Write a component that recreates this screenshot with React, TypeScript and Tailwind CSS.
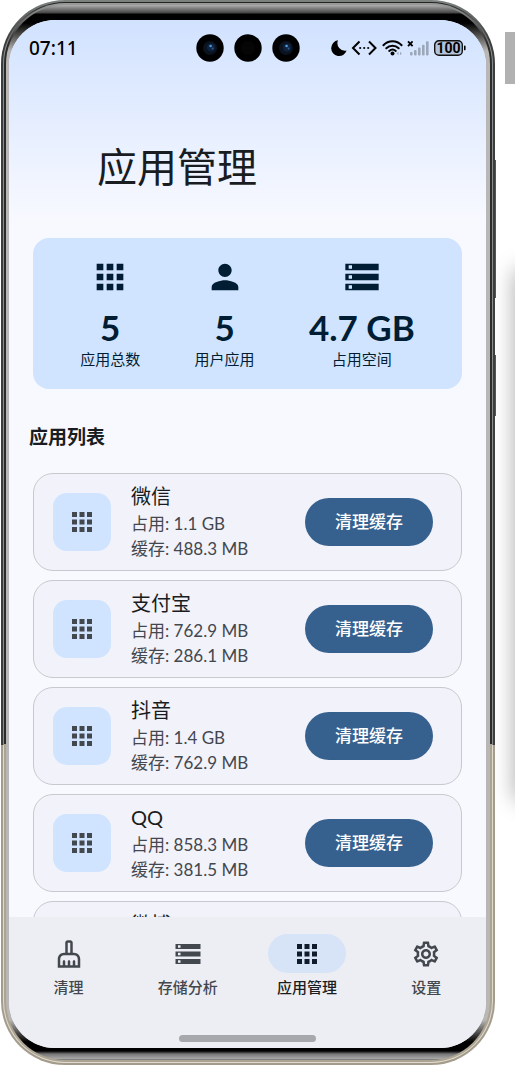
import type { ReactNode } from "react";
import {
  MdApps,
  MdOutlineCleaningServices,
  MdOutlineSettings,
  MdPerson,
  MdStorage,
} from "react-icons/md";

const STATS = [
  { icon: MdApps, value: "5", label: "应用总数" },
  { icon: MdPerson, value: "5", label: "用户应用" },
  { icon: MdStorage, value: "4.7 GB", label: "占用空间" },
];

const APPS = [
  { name: "微信", used: "1.1 GB", cache: "488.3 MB" },
  { name: "支付宝", used: "762.9 MB", cache: "286.1 MB" },
  { name: "抖音", used: "1.4 GB", cache: "762.9 MB" },
  { name: "QQ", used: "858.3 MB", cache: "381.5 MB" },
  { name: "微博", used: "572.2 MB", cache: "190.7 MB" },
];

const TABS = [
  { icon: MdOutlineCleaningServices, label: "清理", active: false },
  { icon: MdStorage, label: "存储分析", active: false },
  { icon: MdApps, label: "应用管理", active: true },
  { icon: MdOutlineSettings, label: "设置", active: false },
];

function Lens({ glass }: { glass: boolean }) {
  return (
    <svg viewBox="0 0 28 28" className="size-7" aria-hidden="true">
      <circle cx="14" cy="14" r="13.7" fill="#000" />
      <circle cx="14" cy="14" r="7" fill={glass ? "#0b1220" : "#050505"} />
      {glass && (
        <>
          <circle cx="15" cy="13.5" r="4" fill="#10233d" />
          <circle cx="14.6" cy="12" r="1.3" fill="#4f9be0" />
          <circle cx="16.6" cy="14.6" r="1" fill="#28609c" />
        </>
      )}
    </svg>
  );
}

function StatusIcons() {
  return (
    <svg
      viewBox="0 0 136 18"
      className="h-[18px] w-[136px]"
      role="img"
      aria-label="电量 100"
    >
      {/* do not disturb */}
      <path
        d="M8 1.3A7.9 7.9 0 1 0 16.6 11.6A7.6 7.6 0 0 1 8 1.3Z"
        fill="#000"
      />
      {/* developer link */}
      <g fill="none" stroke="#000" strokeWidth="2">
        <path d="M29.5 2.5L23 9L29.5 15.5M39 2.5L45.5 9L39 15.5" />
      </g>
      <g fill="#000">
        <circle cx="30.2" cy="9" r="1.1" />
        <circle cx="34.2" cy="9" r="1.1" />
        <circle cx="38.2" cy="9" r="1.1" />
      </g>
      {/* wifi */}
      <g fill="none" stroke="#000" strokeWidth="2" strokeLinecap="round">
        <path d="M53.4 6.2C58.4 .8 66.6 .8 71.6 6.2" />
        <path d="M56.3 9.2C59.8 5.8 65.2 5.8 68.7 9.2" />
        <path d="M59.2 11.9C61.2 10.2 63.8 10.2 65.8 11.9" />
      </g>
      <circle cx="62.5" cy="14.6" r="2" fill="#000" />
      <path d="M66.5 14.5l2-1.8v3.6zM72 14.5l-2-1.8v3.6z" fill="#a3aebf" />
      {/* no signal */}
      <path
        d="M78 2.4l4.6 4.8M82.6 2.4L78 7.2"
        stroke="#000"
        strokeWidth="1.8"
      />
      <g fill="#9ba7bb">
        <rect x="80" y="13" width="2.6" height="3.4" rx="1" />
        <rect x="84" y="11" width="2.6" height="5.4" rx="1" />
        <rect x="88" y="8.6" width="2.6" height="7.8" rx="1" />
        <rect x="92" y="5.8" width="2.6" height="10.6" rx="1" />
        <rect x="96" y="2.2" width="2.6" height="14.2" rx="1" />
      </g>
      {/* battery */}
      <rect
        x="104.7"
        y="1.7"
        width="27.6"
        height="14.6"
        rx="4.2"
        fill="#b4c2d9"
        stroke="#111"
        strokeWidth="1.4"
      />
      <rect x="134" y="6.6" width="1.6" height="4.8" rx=".8" fill="#000" />
      <text
        x="118.5"
        y="14"
        textAnchor="middle"
        fontSize="14"
        className="font-['Roboto',sans-serif] font-bold"
      >
        100
      </text>
    </svg>
  );
}

// Metal rails around the glass: graphite on the upper part, champagne below.
function DeviceFrame({ children }: { children: ReactNode }) {
  return (
    <div className="relative ml-px h-screen min-w-0 flex-1">
      <span className="absolute top-40 -right-px h-[138px] w-px bg-[#555]" />
      <span className="absolute top-[355px] -right-px h-[61px] w-px bg-[#555]" />
      <div className="relative h-full rounded-[64px] bg-[linear-gradient(#7d837f_0,#3c3e3d_40px,#3c3e3d_70%,#a39b8b_70%)] p-0.5">
        <div className="h-full rounded-[62px] bg-[linear-gradient(#222_0,#8b8d8c_40px,#8b8d8c_70%,#e0dace_70%)] p-px">
          <div className="h-full rounded-[61px] bg-[linear-gradient(#9a9c9a_0,#2b2d2d_40px,#2b2d2d_70%,#aca493_70%)] p-0.5">
            <div className="h-full rounded-[59px] bg-[linear-gradient(#b0b0b0_0,#777_4px,#444_8px,#000_9px,#000_18px,#b9b7b5_46px,#b9b7b5_calc(100%-40px),#000_calc(100%-18px),#000_calc(100%-9px),#777_calc(100%-6px),#aaa_calc(100%-1px),#555_100%)] pt-[15px] pr-1 pb-3 pl-[3px]">
              <div className="flex h-full flex-col overflow-hidden rounded-[46px] bg-[#f8f9ff]">
                {children}
              </div>
            </div>
          </div>
        </div>
      </div>
    </div>
  );
}

function Summary() {
  return (
    <section className="mx-6 flex justify-around rounded-2xl bg-[#d0e4ff] px-5 pt-[19px] pb-[18px] text-[#001d34]">
      {STATS.map(({ icon: Icon, value, label }) => (
        <div key={label} className="flex flex-col items-center">
          <Icon className="size-10" />
          <div className="mt-2.5 text-[35px] leading-10 font-bold">{value}</div>
          <div className="text-[15px] leading-6">{label}</div>
        </div>
      ))}
    </section>
  );
}

function AppCard({ name, used, cache }: (typeof APPS)[number]) {
  return (
    <li className="flex shrink-0 items-center gap-5 rounded-[20px] border border-[#c8c8cf] bg-[#f2f2fa] py-[9px] pr-7 pl-[19px]">
      <div className="flex size-[58px] shrink-0 items-center justify-center rounded-[14px] bg-[#d0e4ff]">
        <MdApps className="size-[30px] text-[#43474e]" />
      </div>
      <div className="min-w-0 flex-1 text-[17px] leading-[25px] text-[#43474e]">
        <h3 className="pb-0.5 text-xl leading-[26px] text-[#191c20]">{name}</h3>
        <p>占用: {used}</p>
        <p>缓存: {cache}</p>
      </div>
      <button
        type="button"
        className="h-12 shrink-0 rounded-full bg-[#36618e] px-[30px] text-[17px] leading-6 font-medium text-white"
      >
        清理缓存
      </button>
    </li>
  );
}

function BottomNav() {
  return (
    <nav className="flex h-[131px] shrink-0 flex-col items-center justify-between bg-[#edeef3] pt-[17px] pb-1.5">
      <div className="grid w-full grid-cols-4">
        {TABS.map(({ icon: Icon, label, active }) => (
          <button
            key={label}
            type="button"
            aria-current={active ? "page" : undefined}
            className={`flex flex-col items-center gap-0.5 text-[15px] leading-6 font-medium ${
              active ? "text-[#191c20]" : "text-[#43474e]"
            }`}
          >
            <span
              className={`flex h-[39px] w-[78px] items-center justify-center rounded-full ${
                active ? "bg-[#d7e4f7] text-[#101c2b]" : ""
              }`}
            >
              <Icon className="size-[30px]" />
            </span>
            {label}
          </button>
        ))}
      </div>
      <div className="h-[7px] w-[137px] rounded-full bg-[#a6a8ac]" />
    </nav>
  );
}

export default function App() {
  return (
    <div className="flex h-screen overflow-hidden bg-white font-['Lato','Noto_Sans_CJK_SC',sans-serif]">
      <DeviceFrame>
        <main className="flex min-h-0 flex-1 flex-col bg-[linear-gradient(#d1e2ff_0,#f8f9ff_200px)]">
          <div className="grid h-14 shrink-0 grid-cols-[1fr_auto_1fr] items-center px-5">
            <time className="font-['Noto_Sans',sans-serif] text-[19px] font-medium text-black">
              07:11
            </time>
            <div className="flex gap-2.5">
              <Lens glass />
              <Lens glass={false} />
              <Lens glass />
            </div>
            <div className="flex justify-end">
              <StatusIcons />
            </div>
          </div>

          <h1 className="mt-[61px] mb-[41px] pl-[88px] text-[40px] leading-[60px] text-[#191c20]">
            应用管理
          </h1>

          <Summary />

          <h2 className="mt-8 mb-5 px-5 text-[19px] leading-8 font-bold text-[#191c20]">
            应用列表
          </h2>

          <ul className="flex min-h-0 flex-1 flex-col gap-[9px] overflow-hidden px-6">
            {APPS.map((app) => (
              <AppCard key={app.name} {...app} />
            ))}
          </ul>
        </main>
        <BottomNav />
      </DeviceFrame>

      {/* edge of the emulator toolbar */}
      <aside className="w-5 shrink-0 overflow-hidden pt-8">
        <div className="ml-2.5 h-[52px] bg-[#b1b1b1]" />
        <div className="mt-[186px] ml-5 h-[530px] w-5 shadow-[0_0_22px_rgba(0,0,0,0.35)]" />
      </aside>
    </div>
  );
}
